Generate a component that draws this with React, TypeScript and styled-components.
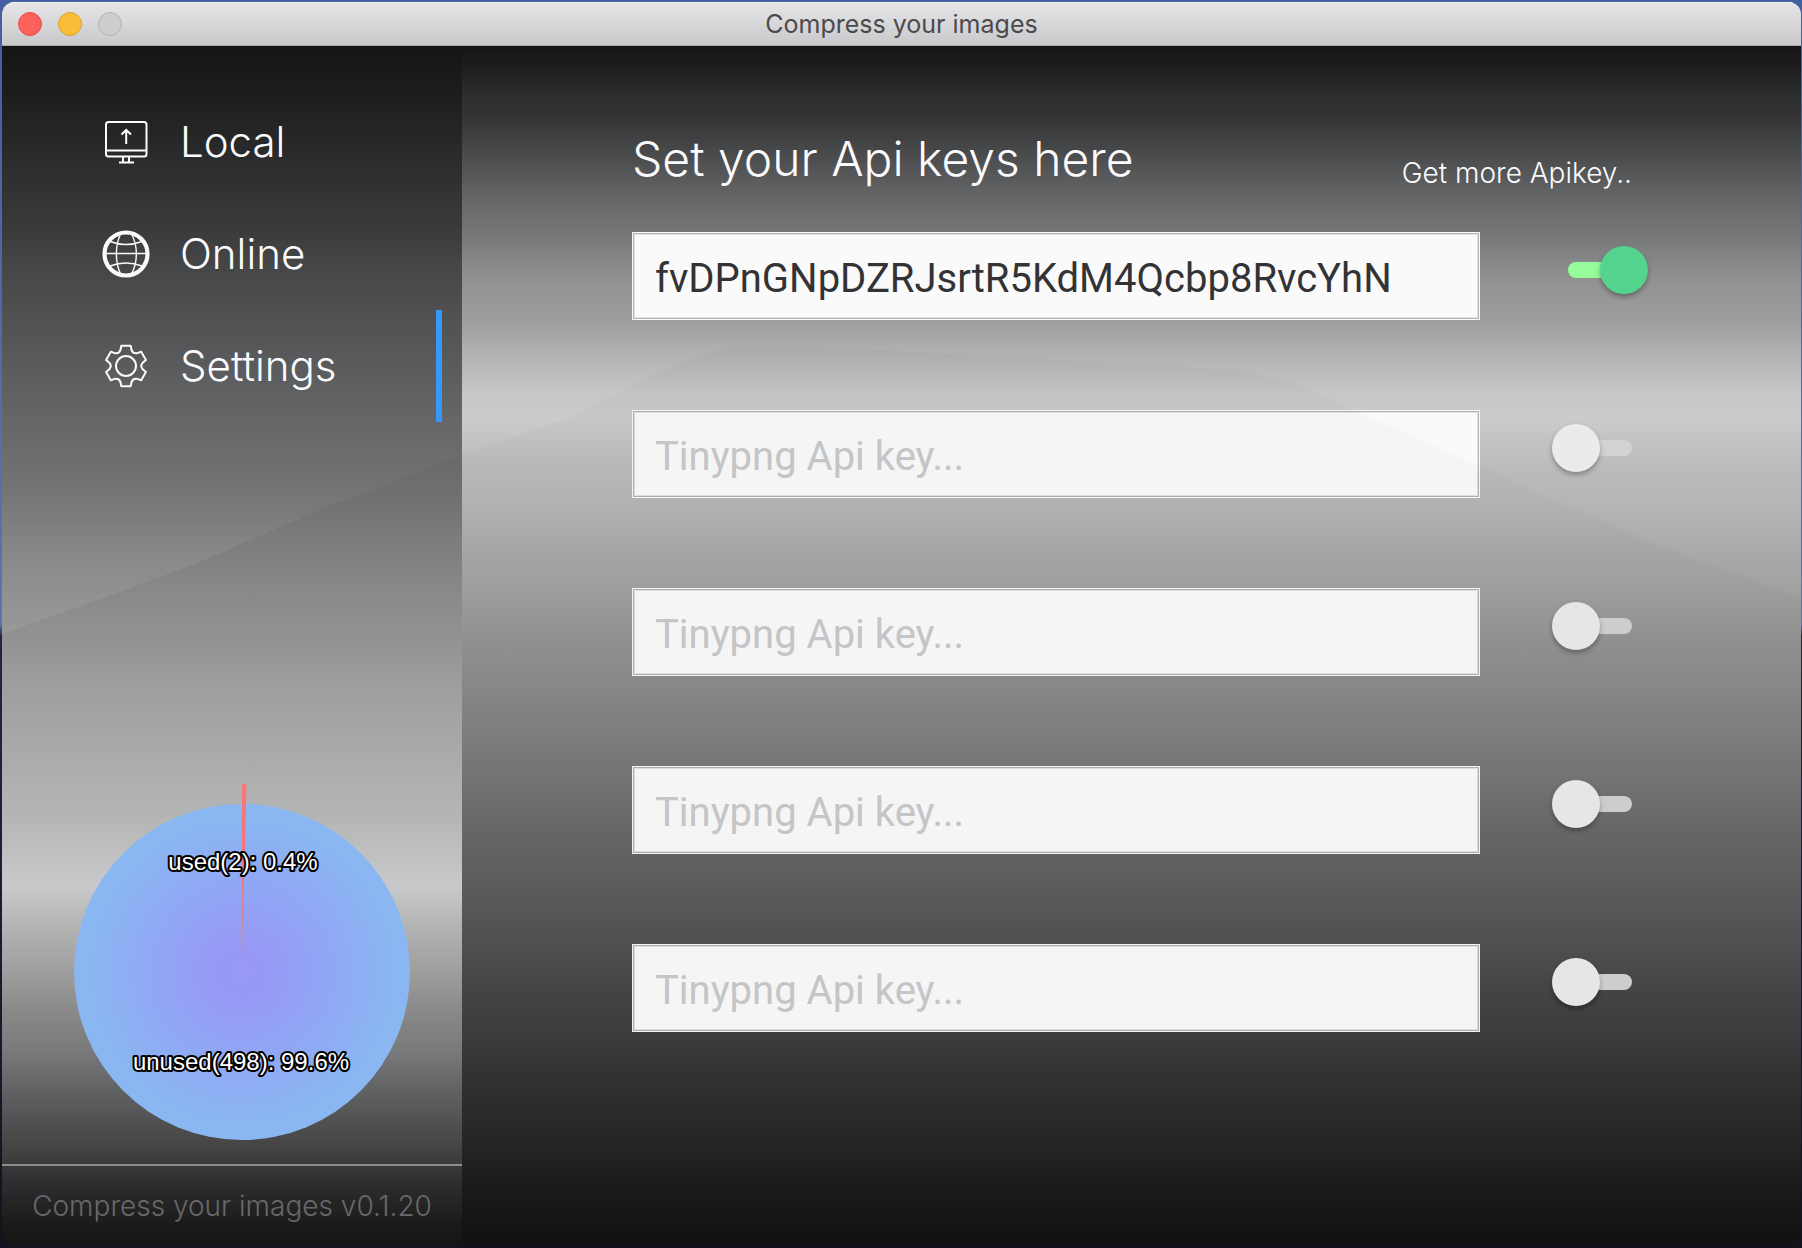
import React, { useState } from 'react';
import styled, { createGlobalStyle } from 'styled-components';

const GlobalStyle = createGlobalStyle`
  *, *::before, *::after { box-sizing: border-box; }
  body {
    margin: 0;
    font-family: Inter, 'Liberation Sans', sans-serif;
    background: linear-gradient(#42609f 0, #5b75ad 50%, #25243c 51%, #14121f 100%);
  }
`;

const Desktop = styled.div`
  display: flex;
  min-height: 100vh;
  padding: 2px 1px 2px 2px;
`;

const AppWindow = styled.div`
  flex: 1;
  display: flex;
  flex-direction: column;
  overflow: hidden;
  border-radius: 12px;
  background: #141414;
`;

const TitleBar = styled.header`
  display: grid;
  grid-template-columns: 1fr auto 1fr;
  align-items: center;
  height: 44px;
  padding: 1px 16px 0;
  border-bottom: 1px solid #a9a9ab;
  background: linear-gradient(#e6e6e8, #c9c9cb);
  box-shadow: inset 0 1px 0 #f4f4f6;
`;

const WindowButtons = styled.div`
  display: flex;
  gap: 16px;
`;

const WindowButton = styled.button<{ $fill: string; $edge: string }>`
  width: 24px;
  height: 24px;
  padding: 0;
  border: 1px solid ${(p) => p.$edge};
  border-radius: 50%;
  background: ${(p) => p.$fill};
`;

const WindowTitle = styled.div`
  font-size: 25px;
  line-height: 32px;
  color: #4a4a4c;
`;

const Body = styled.div`
  flex: 1;
  display: flex;
`;

const Sidebar = styled.aside`
  position: relative;
  width: 460px;
  flex-shrink: 0;
  display: flex;
  flex-direction: column;
  background: linear-gradient(
    #151517 0%, #1d1d1d 4%, #252525 7%, #2c2d2f 10%, #3a3a3b 15%, #444547 18%,
    #4d4d4e 21%, #606163 29%, #6a6a6b 33%, #767779 38%, #878788 42%, #929292 46%,
    #a5a5a5 54%, #adadad 60%, #b3b5b4 64%, #bbbbbb 66%, #c8c9cb 70%, #bcbcbc 72%,
    #aaaaaa 75%, #989998 78%, #8b8b8b 80%, #77787a 84%, #616264 87%, #4f4f50 90%,
    #3c3c3d 93%, #2b2c2e 95%, #1c1c1c 98%, #141414 100%
  );

  &::before {
    content: '';
    position: absolute;
    inset: 0;
    background: linear-gradient(rgba(0, 0, 0, 0.04) 34%, rgba(0, 0, 0, 0.06) 42%, rgba(0, 0, 0, 0.05) 49%, transparent 62%);
    clip-path: polygon(0 49%, 22% 46%, 43% 43%, 67% 39%, 100% 34%, 100% 100%, 0 100%);
    pointer-events: none;
  }
`;

const Nav = styled.nav`
  display: flex;
  flex-direction: column;
  padding: 40px 20px 0 0;
`;

const NavLink = styled.a<{ $active?: boolean }>`
  display: flex;
  align-items: center;
  gap: 30px;
  height: 112px;
  padding-left: 100px;
  border-right: 6px solid ${(p) => (p.$active ? '#3598fd' : 'transparent')};
  font-size: 42px;
  font-weight: 300;
  line-height: 56px;
  color: #fbfbfd;
  text-decoration: none;
`;

const NavIcon = styled.svg`
  width: 48px;
  height: 48px;
  fill: none;
  stroke: #fbfbfd;
  stroke-width: 2;
`;

const UsageChart = styled.svg`
  display: block;
  width: 100%;
  height: 380px;
  margin-top: auto;
`;

const ChartLabel = styled.text`
  font-family: 'Liberation Sans', Arial, sans-serif;
  font-size: 24px;
  text-anchor: middle;
  fill: #fff;
  stroke: #000;
  stroke-width: 4px;
  stroke-linejoin: round;
  paint-order: stroke;
`;

const Version = styled.footer`
  padding: 24px 0;
  border-top: 2px solid #8e8e8f;
  font-size: 28px;
  font-weight: 300;
  line-height: 32px;
  text-align: center;
  color: #68686a;
`;

const Main = styled.main`
  position: relative;
  flex: 1;
  padding: 83px 169px 0 170px;
  background: linear-gradient(
    #151517 0%, #1f1f1f 2%, #2c2d2f 4%, #353536 6%, #424345 8%, #515254 10%,
    #606163 12%, #6c6d6f 14%, #77797b 16%, #868789 18%, #939393 20%, #9e9e9e 23%,
    #adadad 25%, #b9bab9 27%, #c6c7c9 29%, #cacbcd 31%, #c3c3c4 33%, #bbbcbb 35%,
    #b5b6b6 38%, #adadad 41%, #a2a2a2 45%, #929292 50%, #858687 55%, #77797a 60%,
    #6c6d6e 64%, #5e6061 69%, #505153 75%, #47484a 78%, #3e3f41 82%, #303030 87%,
    #282a2b 90%, #1c1c1c 95%, #17181a 97%, #131313 99%
  );

  &::after {
    content: '';
    position: absolute;
    inset: 0;
    background: rgba(0, 0, 0, 0.02);
    clip-path: polygon(0 34%, 8% 31%, 15% 27%, 20% 25%, 26% 25%, 58% 27%, 62% 28%, 70% 32%, 76% 35%, 88% 41%, 100% 46%, 100% 100%, 0 100%);
    pointer-events: none;
  }
`;

const Heading = styled.div`
  display: flex;
  align-items: flex-end;
  justify-content: space-between;
  margin-bottom: 43px;
  color: #fbfbfd;
`;

const Title = styled.h1`
  margin: 0;
  font-size: 48px;
  font-weight: 300;
  line-height: 60px;
`;

const MoreLink = styled.a`
  font-size: 28px;
  font-weight: 300;
  line-height: 32px;
  color: inherit;
  text-decoration: none;
`;

const KeyList = styled.form`
  display: flex;
  flex-direction: column;
  gap: 90px;
`;

const KeyRow = styled.div`
  display: flex;
  align-items: flex-start;
  gap: 88px;
`;

const KeyInput = styled.input`
  flex: 1;
  min-width: 0;
  height: 88px;
  padding: 4px 22px 0;
  border: 1px solid #fbfbfd;
  border-radius: 0;
  outline: none;
  background: #fafafb;
  box-shadow: inset 0 0 0 1px #b0b1b3, inset 0 0 0 2px #e2e2e4;
  font-family: Roboto, 'Liberation Sans', sans-serif;
  font-size: 40px;
  color: #333335;

  &::placeholder {
    color: #c8c9cb;
    opacity: 1;
  }
`;

const Toggle = styled.input`
  appearance: none;
  position: relative;
  flex-shrink: 0;
  width: 64px;
  height: 16px;
  margin: 30px 0 0;
  border-radius: 8px;
  background: #d1d2d4;

  &::before {
    content: '';
    position: absolute;
    top: -16px;
    left: -16px;
    width: 48px;
    height: 48px;
    border-radius: 50%;
    background: #ebebeb;
    box-shadow: 0 3px 5px rgba(0, 0, 0, 0.3);
  }

  &:checked {
    background: #97fb9a;
  }

  &:checked::before {
    left: 32px;
    background: #55d48e;
  }
`;

const polar = (deg: number, r: number) => {
  const a = (deg * Math.PI) / 180;
  return `${(24 + r * Math.sin(a)).toFixed(2)} ${(24 - r * Math.cos(a)).toFixed(2)}`;
};

const gearPath =
  [0, 60, 120, 180, 240, 300]
    .map(
      (a, i) =>
        `${i ? 'L' : 'M'}${polar(a - 19, 17)} L${polar(a - 13, 20.8)} L${polar(a + 13, 20.8)} ` +
        `L${polar(a + 19, 17)} Q${polar(a + 30, 13.8)} ${polar(a + 41, 17)}`,
    )
    .join(' ') + 'Z';

const MonitorIcon = () => (
  <NavIcon viewBox="0 0 48 48" aria-hidden="true">
    <rect x="4" y="4" width="40.5" height="34.5" rx="2.5" />
    <path d="M4 32.5H44.5M21 38.5V44M27 38.5V44M17 44.5H32" />
    <path d="M24.2 26V12.5M19.5 16.5L24.2 12L29 16.5" />
  </NavIcon>
);

const GlobeIcon = () => (
  <NavIcon viewBox="0 0 48 48" aria-hidden="true">
    <circle cx="24" cy="24" r="21.5" strokeWidth="4.2" />
    <path
      strokeWidth="1.4"
      d="M3 23.5H45M18.5 4C13 16 13 32 18.5 44M29.5 4C36 16 36 32 29.5 44M8 11.5Q24 17.5 40 11.5M8 36Q24 30 40 36"
    />
  </NavIcon>
);

const GearIcon = () => (
  <NavIcon viewBox="0 0 48 48" aria-hidden="true">
    <path d={gearPath} strokeLinejoin="round" />
    <circle cx="24" cy="24" r="10" />
  </NavIcon>
);

const navItems = [
  { label: 'Local', Icon: MonitorIcon },
  { label: 'Online', Icon: GlobeIcon },
  { label: 'Settings', Icon: GearIcon },
];

type ApiKey = { value: string; enabled: boolean };

const initialKeys: ApiKey[] = [
  { value: 'fvDPnGNpDZRJsrtR5KdM4Qcbp8RvcYhN', enabled: true },
  { value: '', enabled: false },
  { value: '', enabled: false },
  { value: '', enabled: false },
  { value: '', enabled: false },
];

export default function App() {
  const [keys, setKeys] = useState(initialKeys);
  const update = (index: number, change: Partial<ApiKey>) =>
    setKeys((all) => all.map((k, i) => (i === index ? { ...k, ...change } : k)));

  return (
    <Desktop>
      <GlobalStyle />
      <AppWindow>
        <TitleBar>
          <WindowButtons>
            <WindowButton $fill="#fb625b" $edge="#e2514a" aria-label="Close" />
            <WindowButton $fill="#fabd38" $edge="#dfa032" aria-label="Minimize" />
            <WindowButton $fill="#cdcdcf" $edge="#b2b2b4" aria-label="Zoom" disabled />
          </WindowButtons>
          <WindowTitle>Compress your images</WindowTitle>
        </TitleBar>
        <Body>
          <Sidebar>
            <Nav>
              {navItems.map(({ label, Icon }) => (
                <NavLink key={label} href={`#${label.toLowerCase()}`} $active={label === 'Settings'}>
                  <Icon />
                  {label}
                </NavLink>
              ))}
            </Nav>
            <UsageChart viewBox="0 0 460 380" role="img" aria-label="Key usage">
              <defs>
                <radialGradient id="unused">
                  <stop offset="0" stopColor="#9998f6" />
                  <stop offset="0.15" stopColor="#9799f6" />
                  <stop offset="0.5" stopColor="#91a6f5" />
                  <stop offset="0.9" stopColor="#8ab6f1" />
                  <stop offset="1" stopColor="#8ab6f1" />
                </radialGradient>
                <linearGradient id="used" x1="0" y1="0" x2="0" y2="1">
                  <stop offset="0" stopColor="#f8777b" />
                  <stop offset="0.5" stopColor="#f0767e" />
                  <stop offset="1" stopColor="#a69bb8" />
                </linearGradient>
              </defs>
              <circle cx="240" cy="188" r="168" fill="url(#unused)" />
              <path d="M240 180L240 0L244.5 0Z" fill="url(#used)" />
              <ChartLabel x="241" y="86">used(2): 0.4%</ChartLabel>
              <ChartLabel x="239" y="286">unused(498): 99.6%</ChartLabel>
            </UsageChart>
            <Version>Compress your images v0.1.20</Version>
          </Sidebar>
          <Main>
            <Heading>
              <Title>Set your Api keys here</Title>
              <MoreLink href="#apikey">Get more Apikey..</MoreLink>
            </Heading>
            <KeyList>
              {keys.map((key, i) => (
                <KeyRow key={i}>
                  <KeyInput
                    type="text"
                    aria-label={`Api key ${i + 1}`}
                    placeholder="Tinypng Api key..."
                    spellCheck={false}
                    value={key.value}
                    onChange={(e) => update(i, { value: e.target.value })}
                  />
                  <Toggle
                    type="checkbox"
                    aria-label={`Use api key ${i + 1}`}
                    checked={key.enabled}
                    onChange={(e) => update(i, { enabled: e.target.checked })}
                  />
                </KeyRow>
              ))}
            </KeyList>
          </Main>
        </Body>
      </AppWindow>
    </Desktop>
  );
}
